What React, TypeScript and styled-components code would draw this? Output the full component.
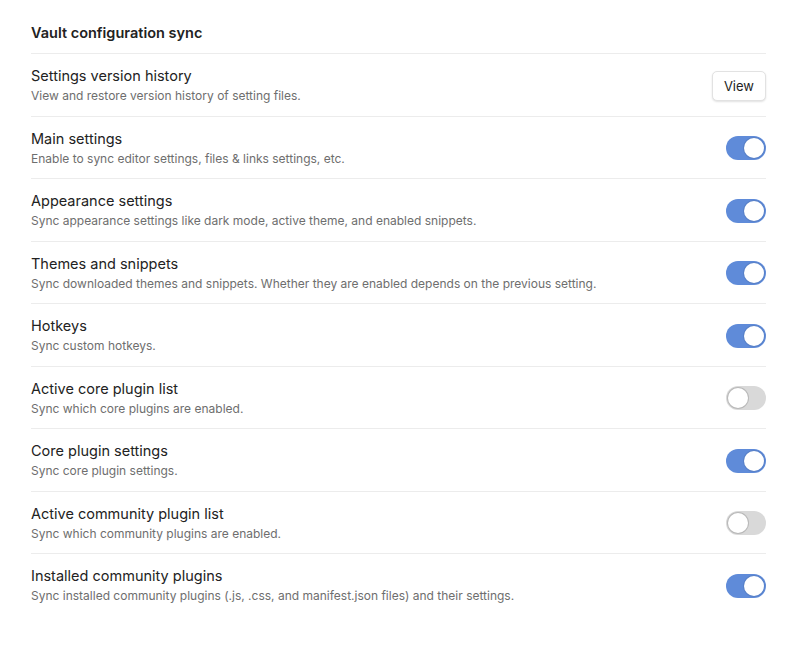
import React from "react";
import styled, { createGlobalStyle } from "styled-components";

const Global = createGlobalStyle`
  html, body { margin: 0; padding: 0; background: #ffffff; }
  body { font-family: Inter, "Noto Sans", "Liberation Sans", sans-serif; color: #222; -webkit-font-smoothing: antialiased; }
`;

const Page = styled.div`
  padding: 24px 34px 0 31px;
`;

const Heading = styled.div`
  font-size: 14.5px;
  font-weight: 600;
  line-height: 18px;
  color: #222;
  padding-bottom: 11px;
`;

const Row = styled.div`
  display: flex;
  align-items: center;
  justify-content: space-between;
  border-top: 1px solid #ececec;
  padding: 12px 0 10.5px;
`;

const Info = styled.div`
  display: flex;
  flex-direction: column;
`;

const Title = styled.div`
  font-size: 14.5px;
  line-height: 20px;
  color: #222;
`;

const Desc = styled.div`
  font-size: 12px;
  line-height: 18px;
  color: #6e6e6e;
  margin-top: 1px;
`;

const Button = styled.button`
  height: 30px;
  padding: 0 11px;
  font-family: inherit;
  font-size: 13px;
  color: #222;
  background: #fff;
  border: 1px solid #e2e2e2;
  border-radius: 5px;
  box-shadow: 0 1px 2px rgba(0, 0, 0, 0.12);
`;

const Toggle = styled.div<{ $on: boolean }>`
  position: relative;
  width: 40px;
  height: 24px;
  border-radius: 12px;
  background: ${(p) => (p.$on ? "#5f8bd9" : "#d9d9d9")};
  flex-shrink: 0;
  &::after {
    content: "";
    position: absolute;
    top: 2px;
    left: ${(p) => (p.$on ? "18px" : "2px")};
    width: 20px;
    height: 20px;
    border-radius: 50%;
    background: #fff;
    box-shadow: 0 0 0 1px ${(p) => (p.$on ? "rgba(0,0,0,0.08)" : "rgba(0,0,0,0.15)")};
  }
`;

type Item = { title: string; desc: string; kind: "button" | "on" | "off" };

const items: Item[] = [
  { title: "Settings version history", desc: "View and restore version history of setting files.", kind: "button" },
  { title: "Main settings", desc: "Enable to sync editor settings, files & links settings, etc.", kind: "on" },
  { title: "Appearance settings", desc: "Sync appearance settings like dark mode, active theme, and enabled snippets.", kind: "on" },
  { title: "Themes and snippets", desc: "Sync downloaded themes and snippets. Whether they are enabled depends on the previous setting.", kind: "on" },
  { title: "Hotkeys", desc: "Sync custom hotkeys.", kind: "on" },
  { title: "Active core plugin list", desc: "Sync which core plugins are enabled.", kind: "off" },
  { title: "Core plugin settings", desc: "Sync core plugin settings.", kind: "on" },
  { title: "Active community plugin list", desc: "Sync which community plugins are enabled.", kind: "off" },
  { title: "Installed community plugins", desc: "Sync installed community plugins (.js, .css, and manifest.json files) and their settings.", kind: "on" },
];

export default function App() {
  return (
    <>
      <Global />
      <Page>
        <Heading>Vault configuration sync</Heading>
        {items.map((it) => (
          <Row key={it.title}>
            <Info>
              <Title>{it.title}</Title>
              <Desc>{it.desc}</Desc>
            </Info>
            {it.kind === "button" ? <Button>View</Button> : <Toggle $on={it.kind === "on"} />}
          </Row>
        ))}
      </Page>
    </>
  );
}
